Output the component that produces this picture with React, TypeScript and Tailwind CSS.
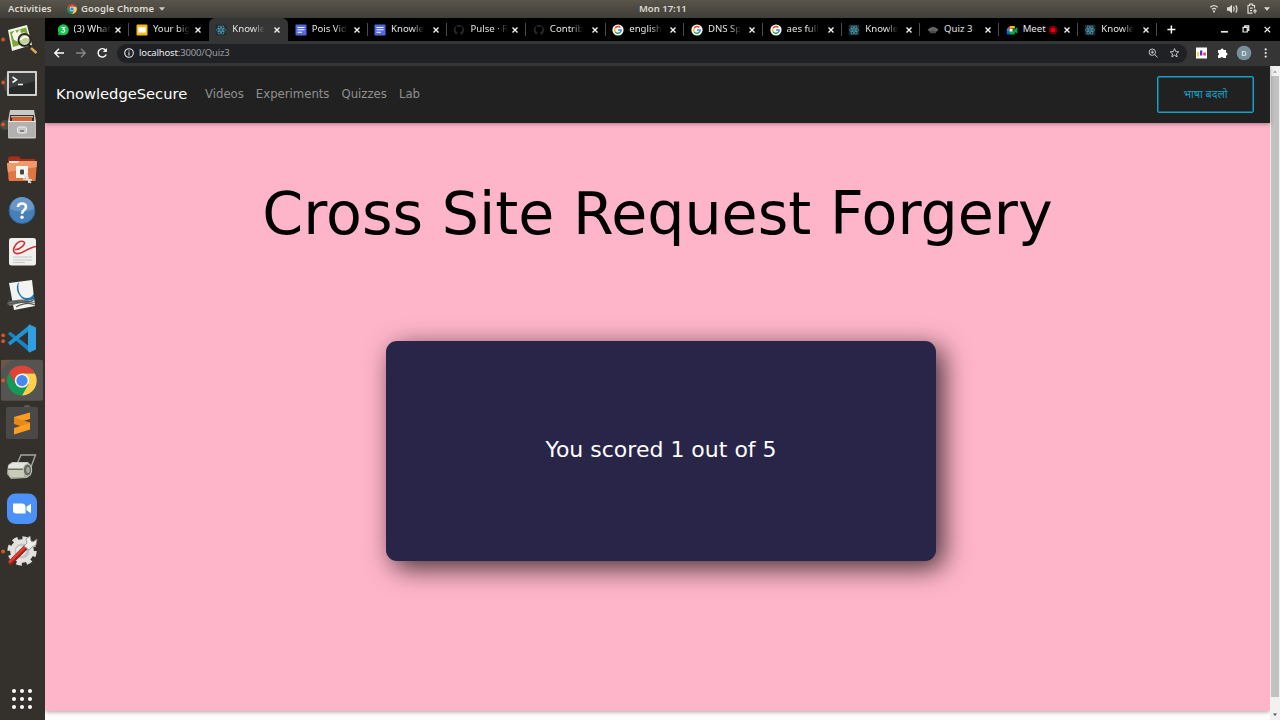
import React from "react";

type FaviconKind = "whatsapp" | "slides" | "react" | "docs" | "github" | "google" | "cap" | "meet";

const tabs: { icon: FaviconKind; title: string; active?: boolean; recording?: boolean }[] = [
  { icon: "whatsapp", title: "(3) What" },
  { icon: "slides", title: "Your big" },
  { icon: "react", title: "Knowle", active: true },
  { icon: "docs", title: "Pois Vid" },
  { icon: "docs", title: "Knowle" },
  { icon: "github", title: "Pulse · R" },
  { icon: "github", title: "Contrib" },
  { icon: "google", title: "english" },
  { icon: "google", title: "DNS Sp" },
  { icon: "google", title: "aes full" },
  { icon: "react", title: "Knowle" },
  { icon: "cap", title: "Quiz 3" },
  { icon: "meet", title: "Meet", recording: true },
  { icon: "react", title: "Knowle" },
];

function Favicon({ kind }: { kind: FaviconKind }) {
  return (
    <svg viewBox="0 0 12 12" className="h-3 w-3 shrink-0">
      {kind === "whatsapp" && (
        <>
          <path d="M1 11.3 1.5 8.5 4 10.5Z" fill="#19c650" />
          <circle cx="6.3" cy="5.8" r="5.5" fill="#19c650" />
          <path d="M4.6 3.5H7.7L6.2 5.2C8.5 5.3 8.3 8.2 6.2 8.2 5.3 8.2 4.7 7.9 4.4 7.3" fill="none" stroke="#fff" strokeWidth="1.1" />
        </>
      )}
      {kind === "slides" && (
        <>
          <rect x=".5" y=".5" width="11" height="11" rx="1.2" fill="#f5ba15" />
          <rect x="2.3" y="3.2" width="7.4" height="5.4" fill="#fff" />
        </>
      )}
      {kind === "docs" && (
        <>
          <rect x=".5" y=".5" width="11" height="11" rx="1" fill="#5468e0" />
          <path d="M2.5 3.5H9.5M2.5 5.8H9.5M2.5 8.2H7" stroke="#fff" strokeWidth="1.1" />
        </>
      )}
      {kind === "react" && (
        <>
          <rect x=".7" y=".7" width="10.6" height="10.6" rx="1" fill="#202a30" />
          <g fill="none" stroke="#4aa6bd" strokeWidth=".65">
            <ellipse cx="6" cy="6" rx="4.7" ry="1.8" />
            <ellipse cx="6" cy="6" rx="4.7" ry="1.8" transform="rotate(60 6 6)" />
            <ellipse cx="6" cy="6" rx="4.7" ry="1.8" transform="rotate(120 6 6)" />
          </g>
          <circle cx="6" cy="6" r=".8" fill="#4aa6bd" />
        </>
      )}
      {kind === "github" && (
        <path
          d="M4.5 11C2.2 10.4.9 8.5.9 6 .9 3.1 3.1.9 6 .9S11.1 3.1 11.1 6C11.1 8.5 9.8 10.4 7.5 11V9.2C7.5 8.6 7.3 8.3 7 8.1 8.7 7.9 9.5 7.1 9.5 5.5 9.5 4.7 9.3 4.2 8.9 3.7 9 3.2 9 2.7 8.8 2.3 8.1 2.3 7.6 2.6 7.2 2.9 6.4 2.7 5.6 2.7 4.8 2.9 4.4 2.6 3.9 2.3 3.2 2.3 3 2.7 3 3.2 3.1 3.7 2.7 4.2 2.5 4.7 2.5 5.5 2.5 7.1 3.3 7.9 5 8.1 4.7 8.4 4.5 8.7 4.5 9.2 3.7 9.3 3.2 9 2.8 8.4"
          fill="#24292e"
        />
      )}
      {kind === "google" && (
        <>
          <circle cx="6" cy="6" r="5.6" fill="#fff" />
          <g fill="none" strokeWidth="1.5">
            <path d="M3.2 4.2A3.3 3.3 0 0 1 8.4 3.6" stroke="#ea4335" />
            <path d="M3.2 7.8A3.3 3.3 0 0 1 3.2 4.2" stroke="#fbbc05" />
            <path d="M8.2 8.4A3.3 3.3 0 0 1 3.2 7.8" stroke="#34a853" />
            <path d="M6 6H9.2A3.3 3.3 0 0 1 8.2 8.4" stroke="#4285f4" />
          </g>
        </>
      )}
      {kind === "cap" && (
        <>
          <path d="M.5 5.8 3 3.8 6 2.7 9 3.8 11.5 5.8 9 8 6 7.5 3 8Z" fill="#646464" />
          <path d="M3 7.6 6 6.5 9 7.6V9.2H3Z" fill="#4a4a4a" />
        </>
      )}
      {kind === "meet" && (
        <>
          <path d="M.8 5 3.8 2V5Z" fill="#ea4335" />
          <path d="M3.8 2H8.8V4.5H3.8Z" fill="#fbbc04" />
          <path d="M.8 4.8H3.4V7.8H.8Z" fill="#2684fc" />
          <path d="M.8 7.6H3.8V10.4H1.6Q.8 10.4.8 9.4Z" fill="#0066da" />
          <path d="M3.8 7.8H6.5L8.6 5.5 11.3 3V9.5L8.8 8V10.4H3.8Z" fill="#00ac47" />
          <path d="M6.8 4.4H8.8V8L6.8 6.2Z" fill="#00832d" />
          <path d="M3.5 4.7H6.6V7.7H3.5Z" fill="#fff" />
        </>
      )}
    </svg>
  );
}

function Cross() {
  return (
    <svg viewBox="0 0 8 8" className="block h-2 w-2 shrink-0">
      <path d="M1.5 1.6 6.5 6.6M6.5 1.6 1.5 6.6" stroke="#f1f3f4" strokeWidth="1.4" />
    </svg>
  );
}

function ChromeLogo({ r, x, y }: { r: number; x: number; y: number }) {
  return (
    <g transform={`translate(${x} ${y}) scale(${r / 15})`}>
      <path d="M-13 -7.5A15 15 0 0 1 13 -7.5L0 -7 -6.5 3.75Z" fill="#db4437" />
      <path d="M-13 -7.5A15 15 0 0 0 0 15L6.3 3.75 0 7.3 -6.2 3.75Z" fill="#159957" />
      <path d="M13 -7H0L6.5 3.75 0 15A15 15 0 0 0 13 -7Z" fill="#fdd04b" />
      <circle r="7.2" fill="#f3f3f3" />
      <circle r="5.6" fill="#4688f1" />
    </g>
  );
}

const dockIcons: { name: string; dots?: number; art: React.ReactNode }[] = [
  {
    name: "Image Viewer",
    dots: 1,
    art: (
      <>
        <path d="M8 12 27 7 32 27 12 33Z" fill="#f2f4e8" />
        <path d="M10 14 26 9.5 30 24 13 29Z" fill="#7ea63a" />
        <path d="M12 16 15 12 17 15 20 11 21 15 25 14 22 18 19 24 14 22Z" fill="#f7f7e7" />
        <path d="M28 26 32 30" stroke="#2b2b29" strokeWidth="2.4" />
        <path d="M31 30 36.5 35" stroke="#dba94b" strokeWidth="2.4" />
        <circle cx="24.5" cy="22" r="6" fill="#d6dcae" fillOpacity=".8" stroke="#2a2b28" strokeWidth="1.8" />
        <path d="M20.5 22Q24 17 28.5 20" fill="none" stroke="#fff" strokeWidth="1.6" />
      </>
    ),
  },
  {
    name: "Terminal",
    dots: 1,
    art: (
      <>
        <ellipse cx="8" cy="23" rx="4.5" ry="9" fill="#45463d" />
        <rect x="7" y="10" width="30" height="25" rx="1" fill="#d0d0d0" />
        <rect x="9" y="12" width="26" height="21" fill="#272929" />
        <path d="M9 12H35V20L9 27Z" fill="#3c3e3e" />
        <path d="M12.5 16 16.5 18.7 12.5 21.5M18 23.5H23" fill="none" stroke="#f4f4f4" strokeWidth="1.6" />
      </>
    ),
  },
  {
    name: "Files",
    dots: 1,
    art: (
      <>
        <circle cx="5" cy="22" r="5" fill="#4a4b41" />
        <path d="M10 7H34L36 18V34Q36 35.5 34.5 35.5H9.5Q8 35.5 8 34V18Z" fill="#c9c9c8" />
        <path d="M10 12H34V19H10Z" fill="#402b20" />
        <path d="M11 13H33V14.5H11Z" fill="#e0b898" />
        <path d="M12 15H32V18.5H12Z" fill="#d9622f" />
        <path d="M8.5 18.5H35.5V34H8.5Z" fill="#b2b1af" />
        <path d="M8.5 18.5H35.5" stroke="#efefef" />
        <rect x="17.5" y="24" width="9" height="6" rx="1.8" fill="#c8c8c7" stroke="#efefef" />
        <path d="M20 28H24" stroke="#706f6b" strokeWidth="1.5" />
      </>
    ),
  },
  {
    name: "Screenshots Folder",
    art: (
      <>
        <path d="M8 13 9 10.5H19L21 13H35V34H8Z" fill="#ac2d16" />
        <path d="M9 15H35V33H9Z" fill="#f4e8df" />
        <path d="M7 17H18L20 15H37L35.5 35H9Z" fill="#e07743" />
        <path d="M7 17H18L20 15H37L36.7 21 7.8 26Z" fill="#ef9a6c" />
        <rect x="16" y="20" width="12" height="12" fill="#f6f6ee" />
        <rect x="20" y="23.5" width="4" height="5" rx="1" fill="#464745" />
        <path d="M24 29 31 37M27 27 29 37M23 33 32 34" stroke="#dedfd9" strokeWidth="1.4" />
      </>
    ),
  },
  {
    name: "Help",
    art: (
      <>
        <circle cx="22" cy="21.6" r="13" fill="#477fb8" stroke="#2a5f99" />
        <path d="M10 20A12 12 0 0 1 34 20Q22 25 10 20Z" fill="#6798c7" />
        <path d="M18 18C18 13.3 26 13.4 26 18 26 21 22 21 22 24.7" fill="none" stroke="#fff" strokeWidth="2.7" />
        <circle cx="22" cy="28.3" r="1.7" fill="#fff" />
      </>
    ),
  },
  {
    name: "Document Viewer",
    art: (
      <>
        <rect x="9" y="7" width="27" height="27.5" rx="2.5" fill="#f0f0ef" />
        <path d="M15 18.5C20 19 28 11.5 23 10.5 17 9 11 19 15 22 21 25 26 17 36 15.5" fill="none" stroke="#cc343b" strokeWidth="1.6" />
        <path d="M13 26H32M13 29H32M13 31.5H25" stroke="#c6c6c5" strokeWidth="1" />
      </>
    ),
  },
  {
    name: "Document Scanner",
    art: (
      <>
        <path d="M9 9 32 6 35 32 14 36Z" fill="#f3f3f2" />
        <path d="M19 8C17 16 20 24 27 24Q32 24 34 19L34 25Q25 29 20 22C16 17 16 11 19 8Z" fill="#1f76b5" />
        <path d="M7 29C17 24 28 25 36 29Q22 27 10 32Z" fill="#71736f" />
        <path d="M8 27C20 27 26 31 35 25M7 30 32 27M16 33Q27 27 35 31" fill="none" stroke="#555852" strokeWidth="1.1" />
      </>
    ),
  },
  {
    name: "Visual Studio Code",
    dots: 2,
    art: (
      <>
        <path d="M8 17 10 14.5 30 30V35.5Z" fill="#1684c7" />
        <path d="M8 25.5 10 28.5 30 13V7.5Z" fill="#1e93d5" />
        <path d="M29.5 7.5 36 10.5V32.5L29.5 35.5 28 34V9Z" fill="#2f9fe0" />
      </>
    ),
  },
  {
    name: "Google Chrome",
    dots: 1,
    art: (
      <>
        <rect x="1" y=".8" width="42" height="41" rx="2" fill="#565450" />
        <path d="M1 1H12Q5 4 1 12Z" fill="#705645" />
        <ChromeLogo x={22} y={21.6} r={15} />
      </>
    ),
  },
  {
    name: "Sublime Text",
    art: (
      <>
        <circle cx="27" cy="7" r="4" fill="#5b5e4b" />
        <rect x="6" y="5" width="32" height="32" rx="2" fill="#4a4947" />
        <path d="M14 15 30 10.5V17L14 21.5Z" fill="#ff9d22" />
        <path d="M14 15.5 30 20.5V27L14 22Z" fill="#e48a17" />
        <path d="M14 26 30 21V27.5L14 32.5Z" fill="#ff9d22" />
      </>
    ),
  },
  {
    name: "Scanner",
    art: (
      <>
        <path d="M17 19 21 10H35.5L31 22" fill="none" stroke="#a4a49f" strokeWidth="1.4" />
        <path d="M8 20 12 17H28L32 21 31 30 27 33 11 34 7 29Z" fill="#a9aea0" />
        <path d="M7.5 25H24V32H10Z" fill="#c9ccb9" />
        <path d="M9 20 13 17.5H28L24 23H8Z" fill="#e4e6dd" />
        <path d="M8 24.5H23" stroke="#6c7066" />
        <ellipse cx="27.5" cy="25" rx="4.2" ry="6" fill="#696c64" stroke="#c5c8bd" />
        <ellipse cx="28" cy="25" rx="1.8" ry="3" fill="#a5a89d" />
      </>
    ),
  },
  {
    name: "Zoom",
    art: (
      <>
        <rect x="7" y="6.5" width="30" height="30.5" rx="8.5" fill="#4b91f7" />
        <path d="M13 16.5H22Q25.5 16.5 25.5 20V26.5H16Q13 26.5 13 23.5Z" fill="#fff" />
        <path d="M26.5 19.8 31 16.8V26.2L26.5 23.2Z" fill="#fff" />
      </>
    ),
  },
  {
    name: "Settings",
    dots: 1,
    art: (
      <>
        <circle cx="22" cy="21" r="12.6" fill="none" stroke="#dfdfdd" strokeWidth="4.2" strokeDasharray="5.4 4.5" />
        <circle cx="22" cy="21" r="11.8" fill="#e2e2e0" />
        <circle cx="22" cy="21" r="7.5" fill="#c4c4c3" />
        <circle cx="21" cy="21" r="5" fill="#e8e8e6" />
        <path d="M10.5 32.5 25.5 17.5" stroke="#981f1b" strokeWidth="5" strokeLinecap="round" />
        <path d="M10 31.5 25 17" stroke="#dc3e31" strokeWidth="2.8" strokeLinecap="round" />
        <path d="M24 16 27 13 26 9 30 6 31 11 33 12 37 9 36 15 32 17 29 20Z" fill="#eeeeec" stroke="#8b8b89" strokeWidth=".8" />
      </>
    ),
  },
];

function Dock() {
  return (
    <aside className="flex w-[45px] shrink-0 flex-col justify-between bg-[#34312d]">
      <div>
        {dockIcons.map((item) => (
          <div key={item.name} className="h-[42.66px]">
            <svg viewBox="0 0 45 42.66" className="block h-full w-full">
              {item.art}
              {item.dots === 1 && <circle cx="3.1" cy="21.5" r="1.9" fill="#d9552a" />}
              {item.dots === 2 && (
                <>
                  <circle cx="3.1" cy="18.3" r="1.9" fill="#d9552a" />
                  <circle cx="3.1" cy="24.2" r="1.9" fill="#d9552a" />
                </>
              )}
            </svg>
          </div>
        ))}
      </div>
      <div className="mb-[11px] grid grid-cols-3 gap-1 self-start pl-3">
        {Array.from({ length: 9 }, (_, i) => (
          <span key={i} className="h-1 w-1 rounded-full bg-white" />
        ))}
      </div>
    </aside>
  );
}

function SystemBar() {
  return (
    <header className="flex h-[18px] shrink-0 items-center bg-linear-to-b from-[#59554b] to-[#403e38] font-['Noto_Sans',sans-serif] text-[9.5px] font-semibold text-[#dfdbd2]">
      <div className="flex w-[639px] items-center pl-2">
        <span className="w-[46px] tracking-[0.13px]">Activities</span>
        <svg viewBox="0 0 10 10" className="ml-[13px] h-2.5 w-2.5">
          <ChromeLogo x={5} y={5} r={5} />
        </svg>
        <span className="ml-1 w-[76px] whitespace-nowrap tracking-[0.1px]">Google Chrome</span>
        <svg viewBox="0 0 6 4" className="ml-0.5 h-1 w-1.5">
          <path d="M0 .2H6L3 3.8Z" fill="#d0ccc3" />
        </svg>
      </div>
      <span className="w-[48px] whitespace-nowrap">Mon 17:11</span>
      <div className="flex flex-1 items-center justify-end pr-[10px]">
        <svg viewBox="0 0 62 14" className="h-[14px] w-[62px]">
          <g fill="none" stroke="#dfdbd2" strokeWidth="1.3">
            <path d="M2.3 5.3Q6 2 9.7 5.3M4 7.3Q6 5.5 8 7.3" />
            <path d="M25.5 4.5Q27 7 25.5 9.5M27.8 3.4Q30 7 27.8 10.6" />
            <path d="M44.5 11.2H40V3.5H41.7V2.2H44.6V3.5H46.5V6.3M42 6.2H44.7M42 8.6H44M44.8 9H49M47 7V11.5" strokeWidth="1.2" />
          </g>
          <path d="M4.6 8.5H7.4L6 11.2ZM19 5.2H21L24 2.7V11.3L21 8.8H19ZM56 5.2H62L59 8.8Z" fill="#dfdbd2" />
        </svg>
      </div>
    </header>
  );
}

function TabStrip() {
  return (
    <div className="flex h-[23px] shrink-0 bg-black pl-[5px] font-['Noto_Sans',sans-serif] text-[9.6px] text-[#e3e4e6]">
      {tabs.map((tab, i) => (
        <div key={i} className={i < 7 ? "w-[79.4px] shrink-0" : "w-[78.7px] shrink-0"}>
          <div
            className={
              tab.active
                ? "relative flex h-full items-center rounded-t-[6px] bg-[#353535] pl-[6.5px] pr-[7px]"
                : "relative flex h-full items-center pl-[6.5px] pr-[7px]"
            }
          >
            <Favicon kind={tab.icon} />
            <span className="ml-[5px] flex-1 whitespace-nowrap">
              <span className={tab.icon === "cap" || tab.recording ? "" : "mask-r-from-65%"}>{tab.title}</span>
            </span>
            {tab.recording && (
              <svg viewBox="0 0 10 10" className="mr-[5px] h-2.5 w-2.5">
                <circle cx="5" cy="5" r="2.8" fill="#e3000b" />
                <circle cx="5" cy="5" r="4" fill="none" stroke="#b00008" strokeWidth=".8" />
              </svg>
            )}
            <Cross />
            {!tab.active && i !== 1 && <span className="absolute right-0 top-[5px] h-[13px] w-px bg-[#4a4b4e]" />}
          </div>
        </div>
      ))}
      <svg viewBox="0 0 120 23" className="h-[23px] w-[119px] shrink-0" fill="none">
        <path d="M10.5 11.5H18.5M14.5 7.5V15.5" stroke="#fff" strokeWidth="1.5" />
        <path d="M64.5 13.8H71.5" stroke="#eee" strokeWidth="1.7" />
        <path d="M86.8 9.3H91V14H86.8ZM88.5 9V7.8H92.5V12.3H91.4" stroke="#eee" strokeWidth="1.2" />
        <path d="M108.5 8.8 114 14.3M114 8.8 108.5 14.3" stroke="#eee" strokeWidth="1.2" />
      </svg>
    </div>
  );
}

function Toolbar() {
  return (
    <div className="flex h-[25px] shrink-0 items-center bg-[#353535] pb-px">
      <svg viewBox="0 0 72 20" className="h-5 w-[72px] shrink-0" fill="none" strokeWidth="1.4">
        <path d="M19 10H10M14 5.8 9.8 10 14 14.2" stroke="#fff" />
        <path d="M31 10H40M36 5.8 40.2 10 36 14.2" stroke="#85868a" />
        <path d="M60.7 7.3A4.2 4.2 0 1 0 61.2 11.5" stroke="#fff" />
        <path d="M61.9 5V9H57.8Z" fill="#fff" />
      </svg>
      <div className="flex h-[19px] w-[1070px] items-center rounded-full bg-[#202125] pl-[6px] pr-[7px] font-['Noto_Sans',sans-serif] text-[9.5px] text-[#9b9ea3]">
        <svg viewBox="0 0 12 12" className="h-3 w-3" fill="none">
          <circle cx="6" cy="6" r="4.3" stroke="#e3e5e8" strokeWidth="1.1" />
          <path d="M6 5.3V8.4M6 3.4V4.5" stroke="#e3e5e8" strokeWidth="1.1" />
        </svg>
        <span className="ml-1 flex-1 whitespace-nowrap tracking-[-0.15px]">
          <span className="text-[#e8eaed]">localhost</span>:3000/Quiz3
        </span>
        <svg viewBox="0 0 34 14" className="h-[14px] w-[34px]" fill="none" stroke="#c4c6c9" strokeWidth="1">
          <circle cx="6.3" cy="6.2" r="3.2" />
          <path d="M8.7 8.6 11.5 11.4M4.7 6.2H7.9M6.3 4.6V7.8" />
          <path d="M28.5 2.6 29.7 5.6 32.8 5.8 30.4 7.8 31.2 10.9 28.5 9.2 25.8 10.9 26.6 7.8 24.2 5.8 27.3 5.6Z" />
        </svg>
      </div>
      <svg viewBox="0 0 93 20" className="h-5 w-[93px] shrink-0">
        <rect x="9" y="4.5" width="11" height="11" fill="#fff" />
        <path d="M10 9H12V13.5H10Z" fill="#f6e01d" />
        <path d="M13 7.5H15.3V12.5H13Z" fill="#5d25e9" />
        <path d="M16.3 9.5H18.8V12.5H16.3Z" fill="#ed3752" />
        <path d="M31 7H33.6A1.5 1.5 0 0 1 36.6 7H39V9.5A1.5 1.5 0 0 1 39 12.5V15H36.3A1.4 1.4 0 0 0 33.6 15H31V12.4A1.4 1.4 0 0 0 31 9.7Z" fill="#fff" />
        <circle cx="57" cy="10" r="7.3" fill="#78909c" />
        <text x="57" y="12.7" textAnchor="middle" fill="#fff" fontSize="7.5" className="font-['Roboto',sans-serif]">D</text>
        <g fill="#e7e8ea">
          <circle cx="78.7" cy="6.4" r="1.1" />
          <circle cx="78.7" cy="10" r="1.1" />
          <circle cx="78.7" cy="13.6" r="1.1" />
        </g>
      </svg>
    </div>
  );
}

function QuizPage() {
  return (
    <div className="flex min-w-0 flex-1 flex-col bg-[#fdfdfd] font-['DejaVu_Sans',sans-serif]">
      <nav className="relative flex h-[57px] shrink-0 items-center bg-[#212121] pl-[11px] pr-4 text-[11.7px] text-[#909090] shadow-[0_1px_4px_rgba(0,0,0,0.35)]">
        <span className="w-[149px] pb-px text-[14.7px] text-white">KnowledgeSecure</span>
        <div className="flex flex-1 gap-3">
          <span>Videos</span>
          <span>Experiments</span>
          <span>Quizzes</span>
          <span>Lab</span>
        </div>
        <button className="h-[37px] w-[97px] rounded-[2px] border-[1.5px] border-[#1a9ec4] pt-0.5 font-['Noto_Sans_Devanagari','Noto_Sans',sans-serif] text-[10.8px] text-[#1a9ec4] ring-[0.5px] ring-inset ring-[#1a9ec4]">
          भाषा बदलो
        </button>
      </nav>
      <main className="flex h-[587.5px] shrink-0 flex-col items-center rounded-b-[3px] bg-[#ffb5c9] shadow-[0_1px_4px_rgba(0,0,0,0.35)]">
        <h1 className="mt-[54px] h-[74px] whitespace-nowrap text-[58.67px] leading-[74px] text-black">
          Cross Site Request Forgery
        </h1>
        <section className="ml-[7px] mt-[89.7px] flex h-[220px] w-[550px] items-center justify-center rounded-[11px] bg-[#282549] pb-[3px] text-[22px] text-white shadow-[7px_7px_27px_0_rgba(0,0,0,0.75)]">
          You scored 1 out of 5
        </section>
      </main>
    </div>
  );
}

function Scrollbar() {
  return (
    <div className="flex w-[10px] shrink-0 flex-col items-center bg-[#f1f1f1]">
      <svg viewBox="0 0 10 10" className="h-2.5 w-2.5">
        <path d="M3 6.8 5 4.5 7 6.8Z" fill="#a3a3a3" />
      </svg>
      <div className="h-[621px] w-2 bg-[#c1c1c1]" />
      <svg viewBox="0 0 10 10" className="mt-auto h-2.5 w-2.5">
        <path d="M3 3.5H7L5 6Z" fill="#505050" />
      </svg>
    </div>
  );
}

export default function App() {
  return (
    <div className="flex h-[720px] w-[1280px] flex-col overflow-hidden">
      <SystemBar />
      <div className="flex min-h-0 flex-1">
        <Dock />
        <div className="flex min-w-0 flex-1 flex-col">
          <TabStrip />
          <Toolbar />
          <div className="flex min-h-0 flex-1 overflow-hidden">
            <QuizPage />
            <Scrollbar />
          </div>
        </div>
      </div>
    </div>
  );
}
